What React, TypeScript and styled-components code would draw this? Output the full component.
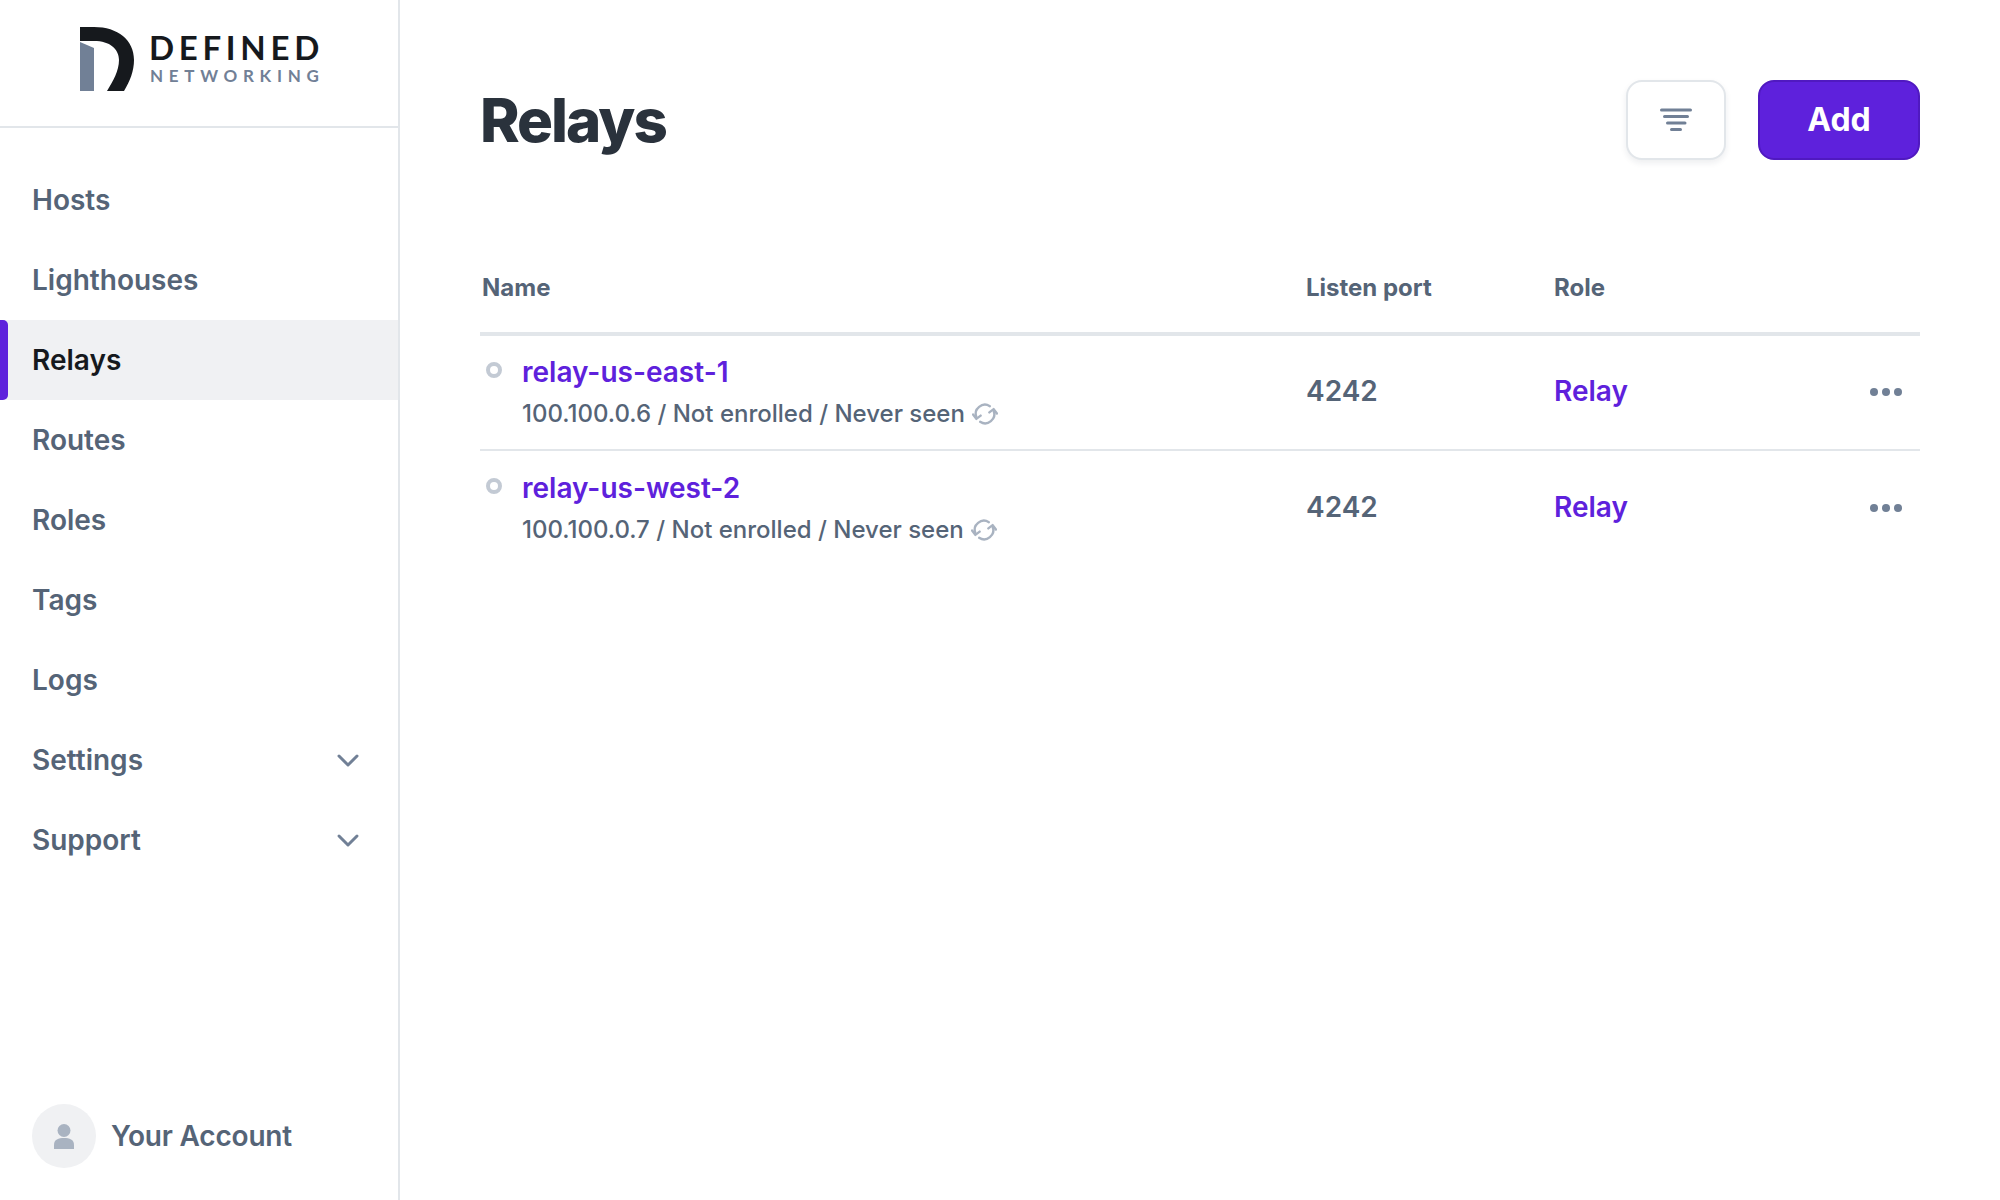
import React from "react";
import styled, { createGlobalStyle } from "styled-components";

const GlobalStyle = createGlobalStyle`
	html, body {
		margin: 0;
		padding: 0;
		background: #fff;
		font-family: Inter, "Liberation Sans", sans-serif;
	}
`;

const Page = styled.div`
	display: flex;
	width: 2000px;
	height: 1200px;
	overflow: hidden;
`;

const Sidebar = styled.aside`
	display: flex;
	flex-direction: column;
	width: 400px;
	height: 1200px;
	box-sizing: border-box;
	border-right: 2px solid #e2e6ea;
`;

const LogoBar = styled.div`
	display: flex;
	align-items: flex-start;
	gap: 15px;
	height: 128px;
	box-sizing: border-box;
	padding: 27px 0 0 80px;
	border-bottom: 2px solid #e2e6ea;
`;

const LogoText = styled.div`
	display: flex;
	flex-direction: column;
	font-family: Lato, "Open Sans", sans-serif;
	margin-top: 4px;
`;

const LogoTop = styled.span`
	font-size: 33px;
	line-height: 33px;
	font-weight: 700;
	letter-spacing: 4.7px;
	color: #16191d;
`;

const LogoBottom = styled.span`
	font-size: 17px;
	line-height: 20px;
	font-weight: 700;
	letter-spacing: 5.7px;
	color: #718096;
	margin: 2px 0 0 1px;
`;

const Nav = styled.nav`
	display: flex;
	flex-direction: column;
	padding-top: 32px;
	flex: 1;
`;

const NavItem = styled.a<{ $active?: boolean }>`
	position: relative;
	display: flex;
	align-items: center;
	justify-content: space-between;
	height: 80px;
	padding: 0 38px 0 32px;
	font-size: 28px;
	font-weight: 600;
	color: ${(props) => (props.$active ? "#16191d" : "#556477")};
	background: ${(props) => (props.$active ? "#f0f1f3" : "transparent")};

	&::before {
		content: "";
		display: ${(props) => (props.$active ? "block" : "none")};
		position: absolute;
		left: 0;
		top: 0;
		bottom: 0;
		width: 8px;
		background: #5e21dc;
		border-radius: 0 5px 5px 0;
	}
`;

const Account = styled.div`
	display: flex;
	align-items: center;
	gap: 15px;
	padding: 0 0 32px 32px;
	font-size: 28px;
	font-weight: 600;
	letter-spacing: -0.2px;
	color: #556477;
`;

const Avatar = styled.div`
	display: flex;
	align-items: center;
	justify-content: center;
	width: 64px;
	height: 64px;
	border-radius: 50%;
	background: #f0f1f3;
`;

const Main = styled.main`
	flex: 1;
	padding: 80px 80px 0;
`;

const Header = styled.header`
	display: flex;
	align-items: center;
	gap: 32px;
	height: 80px;
`;

const Title = styled.h1`
	flex: 1;
	margin: 0;
	font-size: 60px;
	font-weight: 800;
	letter-spacing: -2px;
	color: #2a323c;
`;

const FilterButton = styled.button`
	display: flex;
	align-items: center;
	justify-content: center;
	width: 100px;
	height: 80px;
	padding: 0;
	background: #fff;
	border: 2px solid #e2e6ea;
	border-radius: 16px;
	box-shadow: 0 3px 6px rgba(30, 40, 60, 0.08);
`;

const AddButton = styled.button`
	width: 162px;
	height: 80px;
	padding-bottom: 2px;
	background: #5e21dc;
	border: 2px solid #5019c0;
	border-radius: 16px;
	color: #fff;
	font-family: inherit;
	font-size: 32px;
	font-weight: 700;
`;

const Table = styled.div`
	margin-top: 82px;
`;

const columns = "824px 248px 1fr 60px";

const HeadRow = styled.div`
	display: grid;
	grid-template-columns: ${columns};
	align-items: center;
	height: 90px;
	padding-left: 2px;
	border-bottom: 4px solid #e2e6ea;
	font-size: 24px;
	font-weight: 700;
	color: #556477;
`;

const Row = styled.div`
	display: grid;
	grid-template-columns: ${columns};
	align-items: center;
	height: 114.5px;
	padding-left: 2px;
	box-sizing: border-box;
	border-bottom: 2px solid #e2e6ea;

	&:last-child {
		border-bottom: none;
	}
`;

const NameCell = styled.div`
	display: flex;
	gap: 20px;
`;

const StatusDot = styled.span`
	flex: none;
	width: 16px;
	height: 16px;
	margin: 8px 0 0 4px;
	box-sizing: border-box;
	border: 4.5px solid #c3cad4;
	border-radius: 50%;
`;

const NameStack = styled.div`
	display: flex;
	flex-direction: column;
	gap: 8px;
`;

const RelayLink = styled.a`
	font-size: 28px;
	line-height: 36px;
	font-weight: 600;
	color: #5e21dc;
`;

const Meta = styled.div`
	display: flex;
	align-items: center;
	gap: 7px;
	font-size: 24px;
	line-height: 32px;
	font-weight: 500;
	color: #556477;
`;

const Port = styled.span`
	padding-bottom: 2px;
	font-size: 28px;
	font-weight: 600;
	color: #556477;
`;

const RoleCell = styled.div`
	padding-bottom: 2px;
`;

const Role = styled.a`
	font-size: 28px;
	font-weight: 600;
	color: #5e21dc;
`;

const Dots = styled.div`
	display: flex;
	justify-content: flex-end;
	gap: 4px;
	padding-right: 18px;
`;

const Dot = styled.span`
	width: 8px;
	height: 8px;
	border-radius: 50%;
	background: #718096;
`;

const Chevron = () => (
	<svg width="24" height="24" viewBox="0 0 24 24" fill="none" stroke="#718096" strokeWidth="3" strokeLinecap="round" strokeLinejoin="round">
		<path d="M3 8l9 9 9-9" />
	</svg>
);

const Logo = () => (
	<svg width="54" height="64" viewBox="0 0 54 64">
		<path d="M0 15L14 21V64H0Z" fill="#718096" />
		<path
			d="M0 0H14C38 0 54 13 54 33C54 44 50 54 44 64H27C33 54 39 44 39 33C39 22 30 14 14 14H0Z"
			fill="#16191d"
		/>
	</svg>
);

const FilterIcon = () => (
	<svg width="32" height="24" viewBox="0 0 32 24" stroke="#718096" strokeWidth="3" strokeLinecap="round">
		<path d="M1.5 2H30.5M4.5 8.5H27.5M7.5 15H25M11.5 21.5H20.5" />
	</svg>
);

const SyncIcon = () => (
	<svg width="26" height="26" viewBox="0 0 24 24" fill="none" stroke="#a9b3c1" strokeWidth="2.2" strokeLinecap="round" strokeLinejoin="round">
		<path d="M4 15A8.5 8.5 0 0 1 16.5 4.8" />
		<path d="M1 12.5L4 16.5L8 13.5" />
		<path d="M20 9A8.5 8.5 0 0 1 7.5 19.2" />
		<path d="M23 11.5L20 7.5L16 10.5" />
	</svg>
);

const UserIcon = () => (
	<svg width="20" height="25" viewBox="0 0 20 25" fill="#a9b3c1">
		<circle cx="10" cy="6.5" r="6.5" />
		<path d="M0 25V21C0 15.5 4.5 14 10 14S20 15.5 20 21V25Z" />
	</svg>
);

const navItems = ["Hosts", "Lighthouses", "Relays", "Routes", "Roles", "Tags", "Logs", "Settings", "Support"];
const expandable = ["Settings", "Support"];

const relays = [
	{ name: "relay-us-east-1", ip: "100.100.0.6" },
	{ name: "relay-us-west-2", ip: "100.100.0.7" },
];

export default function App() {
	return (
		<Page>
			<GlobalStyle />
			<Sidebar>
				<LogoBar>
					<Logo />
					<LogoText>
						<LogoTop>DEFINED</LogoTop>
						<LogoBottom>NETWORKING</LogoBottom>
					</LogoText>
				</LogoBar>
				<Nav>
					{navItems.map((item) => (
						<NavItem key={item} $active={item === "Relays"}>
							{item}
							{expandable.includes(item) && <Chevron />}
						</NavItem>
					))}
				</Nav>
				<Account>
					<Avatar>
						<UserIcon />
					</Avatar>
					Your Account
				</Account>
			</Sidebar>
			<Main>
				<Header>
					<Title>Relays</Title>
					<FilterButton>
						<FilterIcon />
					</FilterButton>
					<AddButton>Add</AddButton>
				</Header>
				<Table>
					<HeadRow>
						<span>Name</span>
						<span>Listen port</span>
						<span>Role</span>
						<span />
					</HeadRow>
					{relays.map((relay) => (
						<Row key={relay.name}>
							<NameCell>
								<StatusDot />
								<NameStack>
									<RelayLink>{relay.name}</RelayLink>
									<Meta>
										{relay.ip} / Not enrolled / Never seen
										<SyncIcon />
									</Meta>
								</NameStack>
							</NameCell>
							<Port>4242</Port>
							<RoleCell>
								<Role>Relay</Role>
							</RoleCell>
							<Dots>
								<Dot />
								<Dot />
								<Dot />
							</Dots>
						</Row>
					))}
				</Table>
			</Main>
		</Page>
	);
}
